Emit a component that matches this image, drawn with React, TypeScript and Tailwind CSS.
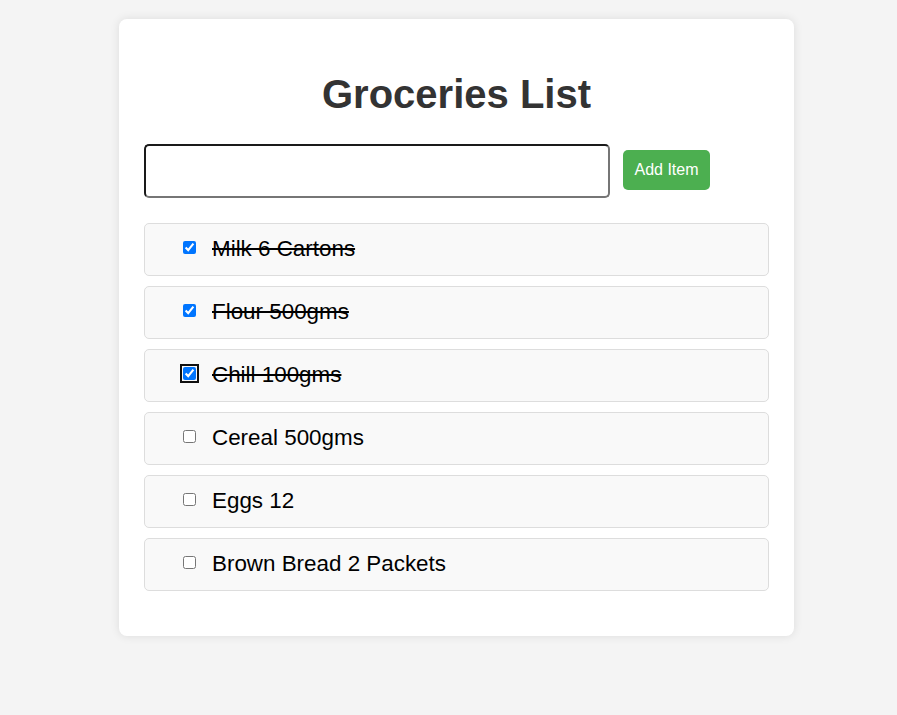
import { useState } from "react";

type Item = {
  id: number;
  name: string;
  done: boolean;
};

const initialItems: Item[] = [
  { id: 1, name: "Milk 6 Cartons", done: true },
  { id: 2, name: "Flour 500gms", done: true },
  { id: 3, name: "Chill 100gms", done: true },
  { id: 4, name: "Cereal 500gms", done: false },
  { id: 5, name: "Eggs 12", done: false },
  { id: 6, name: "Brown Bread 2 Packets", done: false },
];

function GroceryItem({
  item,
  focused,
  onToggle,
}: {
  item: Item;
  focused?: boolean;
  onToggle: (id: number) => void;
}) {
  return (
    <li className="h-[53px] rounded-[5px] border border-[#ddd] bg-[#f9f9f9] pl-[38px] pt-[12px]">
      <label className="text-[22.4px] leading-[26px] text-black">
        <input
          type="checkbox"
          checked={item.done}
          onChange={() => onToggle(item.id)}
          className={`align-[2px] ${
            focused ? "outline-2 outline-offset-[1px] outline-[#101010]" : ""
          }`}
        />
        <span className={`ml-[16px] ${item.done ? "line-through" : ""}`}>
          {item.name}
        </span>
      </label>
    </li>
  );
}

export default function App() {
  const [items, setItems] = useState<Item[]>(initialItems);
  const [text, setText] = useState("");

  const toggle = (id: number) =>
    setItems((prev) =>
      prev.map((i) => (i.id === id ? { ...i, done: !i.done } : i))
    );

  const addItem = () => {
    if (!text.trim()) return;
    setItems((prev) => [
      ...prev,
      { id: Date.now(), name: text.trim(), done: false },
    ]);
    setText("");
  };

  return (
    <div className="min-h-screen bg-[#f4f4f4] pt-[19px] font-['Liberation_Sans',Arial,sans-serif]">
      <div className="ml-[119px] w-[675px] rounded-[8px] bg-white px-[25px] pt-[25px] pb-[45px] shadow-[0_0_10px_rgba(0,0,0,0.1)]">
        <h1 className="my-[27px] text-center text-[40px] font-bold leading-[46px] text-[#333]">
          Groceries List
        </h1>

        <div className="flex items-start">
          <input
            type="text"
            value={text}
            onChange={(e) => setText(e.target.value)}
            className="h-[54px] w-[466px] rounded-[5px] border-2 border-t-[#1a1a1a] border-l-[#1a1a1a] border-r-[#767676] border-b-[#767676] bg-white px-2 text-base"
          />
          <button
            onClick={addItem}
            className="ml-[13px] mt-[6px] h-[40px] w-[87px] rounded-[5px] bg-[#4caf50] text-[16px] text-white"
          >
            Add Item
          </button>
        </div>

        <ul className="mt-[25px] flex flex-col gap-[10px]">
          {items.map((item) => (
            <GroceryItem
              key={item.id}
              item={item}
              focused={item.id === 3}
              onToggle={toggle}
            />
          ))}
        </ul>
      </div>
    </div>
  );
}
